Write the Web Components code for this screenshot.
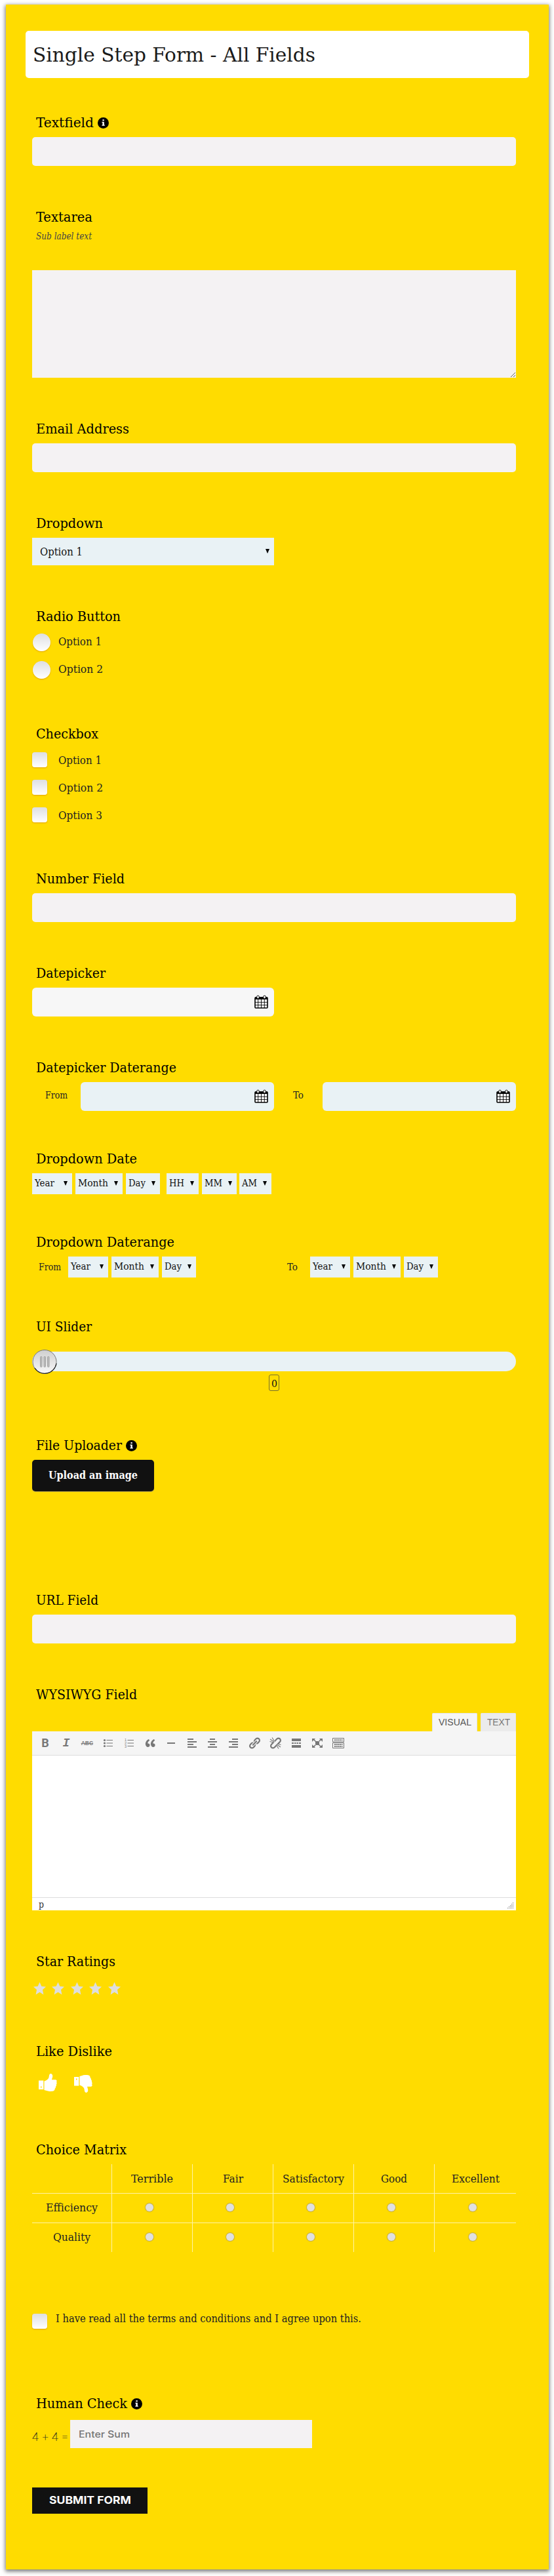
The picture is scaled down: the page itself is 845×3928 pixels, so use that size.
<!DOCTYPE html>
<html lang="en"><head><meta charset="utf-8"><title>Single Step Form - All Fields</title>
<style>
html,body{margin:0;padding:0;background:#fff}
body{font-family:"DejaVu Serif Condensed","DejaVu Serif",serif;font-stretch:condensed;color:#222;height:3928px;overflow:hidden}
</style></head><body>
<form-card>
<form-title><fit-text w="431">Single Step Form - All Fields</fit-text></form-title>
<form-field label="Textfield" w="88" h="144" info><text-box></text-box></form-field>
<form-field label="Textarea" w="86" h="323" sub="Sub label text"><text-box area></text-box></form-field>
<form-field label="Email Address" w="142" h="144"><text-box></text-box></form-field>
<form-field label="Dropdown" w="102" h="142"><select-box big label="Option 1" tw="65" bw="369"></select-box></form-field>
<form-field label="Radio Button" w="129" h="179"><choice-item round label="Option 1" tw="66"></choice-item><choice-item round label="Option 2" tw="68"></choice-item></form-field>
<form-field label="Checkbox" w="95" h="221"><choice-item label="Option 1" tw="66"></choice-item><choice-item label="Option 2" tw="68"></choice-item><choice-item label="Option 3" tw="67"></choice-item></form-field>
<form-field label="Number Field" w="135" h="144"><text-box></text-box></form-field>
<form-field label="Datepicker" w="106" h="144"><date-box style="width:369px;--bg:#f7f7f7"></date-box></form-field>
<form-field label="Datepicker Daterange" w="214" h="139"><date-range></date-range></form-field>
<form-field label="Dropdown Date" w="154" h="127"><date-selects time></date-selects></form-field>
<form-field label="Dropdown Daterange" w="211" h="129"><select-range></select-range></form-field>
<form-field label="UI Slider" w="85" h="181"><range-slider></range-slider></form-field>
<form-field label="File Uploader" w="131" h="236" info><form-button rounded><fit-text w="136">Upload an image</fit-text></form-button></form-field>
<form-field label="URL Field" w="95" h="144"><text-box></text-box></form-field>
<form-field label="WYSIWYG Field" w="154" h="407"><rich-editor></rich-editor></form-field>
<form-field label="Star Ratings" w="121" h="137"><star-rating></star-rating></form-field>
<form-field label="Like Dislike" w="116" h="150"><like-dislike></like-dislike></form-field>
<form-field label="Choice Matrix" w="138" h="264"><choice-matrix></choice-matrix></form-field>
<terms-check></terms-check>
<form-field label="Human Check" w="139" h="142" info><human-check></human-check></form-field>
<form-button><fit-text w="125">SUBMIT FORM</fit-text></form-button>
</form-card>
<script>
const define = (name, render) => customElements.define(name, class extends HTMLElement {
  connectedCallback() {
    if (this.shadowRoot) return;
    this.attachShadow({ mode: 'open' }).innerHTML = '<style>:host,*{box-sizing:border-box}' + render(this);
  }
});
const attr = (el, n) => el.getAttribute(n) || '';
const knob = 'background:linear-gradient(#dedfe2,#fff);box-shadow:0 1px 2px rgba(190,90,0,.45)';

define('form-card', () => `:host{display:block;margin:7px 8px 0 9px;height:3911px;padding:40px 50px 0 40px;background:#ffdc00;box-shadow:0 2px 6px 1px #777}</style><slot></slot>`);
define('form-title', () => `:host{display:block;height:72px;margin:0 -20px 54px -10px;padding:12px 0 0 11px;background:#fff;border-radius:5px;font-size:30px;line-height:49px;color:#1b1b1b}</style><slot></slot>`);
define('info-dot', () => `:host{display:block;width:17px;height:17px}svg{display:block}</style><svg width="17" height="17" viewBox="0 0 17 17"><circle cx="8.5" cy="8.5" r="8.5" fill="#000"/><path d="M7.400 3.200h2.400v2.100H7.400zM6.400 6.700h3.400v4.700h1v1.300H6.400v-1.300h1V8h-1z" fill="#fff"/></svg>`);
define('form-field', el => `:host{display:block;height:${attr(el,'h')}px}
.label{display:flex;height:28px;line-height:28px;font-size:20px;color:#000;padding-left:6px;gap:6px}
info-dot{margin-top:6px}.sub{height:22px;padding-left:6px;font-size:14px;line-height:28px;font-style:italic;color:#444;margin-bottom:44px;margin-top:1px}
.body{margin-top:8px}</style>
<div class="label"><fit-text w="${attr(el,'w')}">${attr(el,'label')}</fit-text>${el.hasAttribute('info')?'<info-dot></info-dot>':''}</div>
${attr(el,'sub')?`<div class="sub"><fit-text w="85">${attr(el,'sub')}</fit-text></div>`:''}<div class="body" ${attr(el,'sub')?'style="margin-top:0"':''}><slot></slot></div>`);
define('text-box', el => `:host{display:block}div{height:44px;background:#f4f2f3;border-radius:5px}
div.area{height:164px;border-radius:0;display:flex;justify-content:flex-end;align-items:flex-end}</style>
<div class="${el.hasAttribute('area')?'area':''}">${el.hasAttribute('area')?'<svg width="9" height="9" stroke="#666" stroke-width="1"><path d="M1 8L8 1M5 8L8 5"/></svg>':''}</div>`);
define('select-box', el => { const big = el.hasAttribute('big'); return `:host{display:block;flex:none;width:${attr(el,'bw')}px}
div{display:flex;justify-content:space-between;height:${big?42:32}px;line-height:${big?43:31}px;font-size:${big?16:14}px;background:#e9f2f5;color:#111;padding:0 7px 0 ${big?12:4}px;align-items:flex-start}
svg{margin-top:${big?17:12}px}</style><div><fit-text w="${attr(el,'tw')}">${attr(el,'label')}</fit-text><svg width="6" height="7"><path d="M0 0h6L3 7z" fill="#000"/></svg></div>`; });
define('choice-item', el => { const r = el.hasAttribute('round'); return `:host{display:flex;height:42px;line-height:32px;font-size:16px}
.k{${knob};flex:none;width:${r?27:23}px;height:${r?27:23}px;border-radius:${r?'50%':'4px'};margin:${r?'4px 12px 0 1px':'6px 17px 0 0'}}
fit-text{margin-top:${r?1:3}px}</style><i class="k"></i><fit-text w="${attr(el,'tw')}">${attr(el,'label')}</fit-text>`; });
define('date-box', () => `:host{display:block;flex:none}div{height:44px;border-radius:6px;background:var(--bg,#e9f2f5);display:flex;justify-content:flex-end;padding:11px 9px 0 0}</style>
<div><svg width="21" height="21" viewBox="0 0 21 21"><rect x="1" y="4" width="19" height="16" fill="#fff" stroke="#000" stroke-width="1.6" rx="1"/><path d="M1 3.5h19V7H1z"/><path d="M1 11.3h19M1 15.6h19M5.7 7v13M10.5 7v13M15.3 7v13" stroke="#000" stroke-width=".9"/><rect x="3.8" y="1.2" width="3.4" height="4.5" rx="1.5" fill="#fff" stroke="#000"/><rect x="13.8" y="1.2" width="3.4" height="4.5" rx="1.5" fill="#fff" stroke="#000"/></svg></div>`);
define('date-range', () => `:host{display:flex;font-size:14px;line-height:40px}.l{width:74px;display:flex;justify-content:center}.t{padding-right:0}date-box{width:295px}</style>
<span class="l"><fit-text w="34">From</fit-text></span><date-box></date-box><span class="l t"><fit-text w="16">To</fit-text></span><date-box></date-box>`);
define('date-selects', el => `:host{display:flex;gap:5px}.g{margin-left:5px}.h{margin-left:-1px}</style>
<select-box label="Year" tw="30" bw="61"></select-box><select-box label="Month" tw="46" bw="72"></select-box><select-box label="Day" tw="26" bw="52"></select-box>
${el.hasAttribute('time')?'<select-box class="g" label="HH" tw="23" bw="49"></select-box><select-box label="MM" tw="27" bw="53"></select-box><select-box class="h" label="AM" tw="23" bw="49"></select-box>':''}`);
define('select-range', () => `:host{display:grid;grid-template-columns:369px 369px;font-size:14px;line-height:32px}div{display:flex}span{width:55px;padding-left:10px}.t{padding-left:20px}</style>
<div><span><fit-text w="34">From</fit-text></span><date-selects></date-selects></div><div><span class="t"><fit-text w="16">To</fit-text></span><date-selects></date-selects></div>`);
define('range-slider', () => `:host{display:block;padding-top:16px}.t{height:30px;border-radius:15px;background:#e9f2f5}
svg{display:block;position:relative;top:-3px}.v{width:16px;height:25px;margin:5px auto 0;border:1px solid #77702e;border-radius:3px;font-size:14px;line-height:26px;display:flex;justify-content:center;color:#111}</style>
<div class="t"><svg width="39" height="38"><defs><linearGradient id="g" x2="0" y2="1"><stop stop-color="#cfcfcf"/><stop offset="1" stop-color="#f8f8f8"/></linearGradient></defs><circle cx="19" cy="18.5" r="18" fill="url(#g)" stroke="#777"/><path d="M4 28A18 18 0 0 0 37 21" fill="none" stroke="#222" stroke-width="1.2"/><g fill="#bbb" stroke="#a5a5a5"><rect x="12.5" y="10.5" width="2.500" height="16" rx="1"/><rect x="18" y="10.5" width="2.500" height="16" rx="1"/><rect x="23.500" y="10.500" width="2.500" height="16" rx="1"/></g></svg></div><div class="v"><fit-text w="9">0</fit-text></div>`);
define('form-button', el => el.hasAttribute('rounded') ? `:host{display:flex;justify-content:center;width:186px;height:48px;background:#111;color:#fff;border-radius:5px;box-shadow:0 1px 1px #b3a14b;font-size:16px;font-weight:bold;line-height:48px}</style><slot></slot>`
: `:host{display:flex;justify-content:center;width:176px;height:40px;background:#111;color:#fff;font:bold 16px/39px Inter,sans-serif}</style><slot></slot>`);

const bars = (a,b) => `<path d="M${a} 3H${b}V5H${a}zM3 7h14v2H3zM${a} 11H${b}v2H${a}zM3 15h14v2H3z"/>`;
const linkHalves = 'M17.74 2.76c1.68 1.69 1.68 4.41 0 6.1l-1.53 1.52c-1.12 1.12-2.7 1.47-4.14 1.09l2.62-2.61.76-.77.76-.76c.84-.84.84-2.2 0-3.04-.84-.85-2.2-.85-3.04 0l-.77.76-3.38 3.38c-.37-1.44-.02-3.02 1.1-4.14l1.52-1.53c1.69-1.68 4.42-1.68 6.1 0zM7.83 15.72l4.14-4.15c.38 1.44.03 3.02-1.09 4.14l-1.52 1.53c-1.69 1.68-4.41 1.68-6.1 0-1.68-1.68-1.68-4.42 0-6.1l1.53-1.52c1.12-1.12 2.7-1.47 4.14-1.1l-4.14 4.15c-.85.84-.85 2.2 0 3.05.84.84 2.2.84 3.04 0z';
const rules = '<path d="M7.500 5h9.500v1H7.500zM7.500 9.500h9.500v1H7.500zM7.500 14h9.500v1H7.500z"/>';
const icons = [
 rules + '<circle cx="4.500" cy="5.500" r="1.600"/><circle cx="4.500" cy="10" r="1.600"/><circle cx="4.500" cy="14.500" r="1.600"/>',
 rules + '<text x="3" y="7.300" font-size="5.500">1</text><text x="3" y="12" font-size="5.500">2</text><text x="3" y="16.700" font-size="5.500">3</text>',
 '<path d="M9.490 13.220c0-.74-.2-1.380-.61-1.900-.62-.78-1.830-.88-2.530-.72-.29-1.650 1.110-3.750 2.920-4.650L7.880 4c-2.730 1.300-5.420 4.280-4.960 8.050C3.210 14.430 4.590 16 6.540 16c.85 0 1.560-.25 2.120-.75s.83-1.180.83-2.030zm8.050 0c0-.74-.2-1.380-.61-1.900-.63-.78-1.830-.88-2.530-.72-.29-1.650 1.110-3.750 2.920-4.650L15.930 4c-2.730 1.300-5.410 4.280-4.950 8.050.29 2.380 1.660 3.950 3.610 3.950.85 0 1.560-.25 2.120-.75s.83-1.180.83-2.030z"/>',
 '<path d="M4 9h12v2H4z"/>',
 bars(3,12), bars(6,14), bars(8,17),
 `<path d="${linkHalves}M8.590 13.430l5.340-5.340c.42-.42.42-1.100 0-1.520-.44-.43-1.130-.39-1.530 0l-5.330 5.340c-.42.42-.42 1.100 0 1.520.44.43 1.130.39 1.520 0z"/>`,
 `<path d="${linkHalves}"/><path d="M2 4l6 4M5 1.500L8.500 7M1.500 7.500L7 9M18 16l-6-4M15 18.500L11.500 13M18.500 12.500L13 11" stroke="#777" stroke-width="1.100"/>`,
 '<path d="M3 3h14v4H3zM3 13h14v4H3zM3 9h3v2H3zM7 9h2.500v2H7zM10.500 9H13v2h-2.500zM14 9h3v2h-3z"/>',
 '<path d="M7 7h6v6H7zM2 3h5L5.600 4.400 8 7 7 8 4.400 5.600 2 8zM18 3h-5l1.400 1.400L12 7l1 1 2.600-2.400L18 8zM2 17h5l-1.400-1.400L8 13l-1-1-2.600 2.400L2 12zM18 17h-5l1.400-1.400L12 13l1-1 2.600 2.400L18 12z"/>',
 '<path d="M1.500 2.500h17v5.500h-17zM1.500 9.500h17v8h-17z" fill="none" stroke="#777"/><path d="M4 5.200h12.500M4 12h12.500M4 15h12.500" stroke="#777" stroke-width="1.900" stroke-dasharray="2 .8"/>'
];
define('rich-editor', () => `:host{display:block;padding-top:6px;font-family:"Liberation Sans",Arial,sans-serif}
.tabs{height:28px;display:flex;justify-content:flex-end;gap:5px;font-size:14px;line-height:28px;color:#555}
.tab{width:69px;background:#f5f5f5;display:flex;justify-content:center;border:1px solid #e5e5e5;border-bottom:0;line-height:27px;border-radius:2px 2px 0 0}.off{width:54px;background:#ebebeb;color:#777}
.bar{height:37px;background:#f5f5f5;border-bottom:1px solid #ddd;padding:8px 0 0 4px;display:flex;color:#777}
.c{width:31.95px;height:20px;display:flex;justify-content:center;align-items:center;line-height:20px;fill:#777}
.b{font:bold 18px/20px Roboto,sans-serif}.i{font:italic bold 18px/20px "Liberation Mono",monospace}.s{font:bold 8.500px/20px "Liberation Sans",sans-serif;text-decoration:line-through}
.area{height:217px;background:#fff;border-bottom:1px solid #ddd}.foot{height:19px;background:#fff;padding:0 3px 0 10px;font:14px/21px "DejaVu Serif Condensed","DejaVu Serif",serif;color:#333;display:flex;justify-content:space-between;align-items:flex-start}</style>
<div class="tabs"><span class="tab"><fit-text w="50">VISUAL</fit-text></span><span class="tab off"><fit-text w="35">TEXT</fit-text></span></div>
<div class="bar"><span class="c b">B</span><span class="c i">I</span><span class="c s">ABC</span>${icons.map(i=>`<span class="c"><svg width="20" height="20" viewBox="0 0 20 20">${i}</svg></span>`).join('')}</div>
<div class="area"></div><div class="foot"><fit-text w="8">p</fit-text><svg width="10" height="10" style="margin-top:7px" fill="#777"><path d="M8 0h1v1H8zM8 2h1v1H8zM6 2h1v1H6zM8 4h1v1H8zM6 4h1v1H6zM4 4h1v1H4zM8 6h1v1H8zM6 6h1v1H6zM4 6h1v1H4zM2 6h1v1H2zM8 8h1v1H8zM6 8h1v1H6zM4 8h1v1H4zM2 8h1v1H2zM0 8h1v1H0z"/></svg></div>`);
define('star-rating', () => `:host{display:flex;padding:9px 0 0 2px;gap:9.400px}svg{display:block}</style>` + '<svg width="19" height="20" viewBox="0 0 19 19"><path d="M9.500 0l2.800 6.300 6.700.7-5 4.600L15.400 19 9.500 15.200 3.600 19 5 11.600 0 7l6.700-.7z" fill="#dedede"/></svg>'.repeat(5));
const thumb = '<path fill="#fff" fill-rule="evenodd" d="M0 10.500h7.300v13.500H0zM3 19.500v2h1.500v-2zM8.500 11.500c3-.8 5-2.500 6.500-4.500 1-1.700.6-4.300 1.500-5.800 1-1.700 3.700-1.400 4.500 1 .8 2.600-.6 4.800-1 7.100h5.500c2.500.3 2.500 2.500 1.600 3.500.8 1 .7 2.700-.3 3.700.5 1.200 0 2.600-.8 3.300.2 1.200-.3 2.300-1.200 2.800-.2 4.300-3.500 4.600-8.300 4.300-3.500-.2-5.500-1.600-8-1.900z"/>';
define('like-dislike', () => `:host{display:flex;padding:12px 0 0 10px;gap:26px}.d{margin-top:2px}</style><svg width="28" height="27">${thumb}</svg><svg class="d" width="28" height="27"><g transform="matrix(1 0 0 -1 0 27)">${thumb}</g></svg>`);
const cell = (t,w) => `<div><fit-text w="${w}">${t}</fit-text></div>`;
const row = '<div class="r"><i></i></div>'.repeat(5);
define('choice-matrix', () => `:host{display:grid;grid-template-columns:121px repeat(4,123px) 125px;grid-template-rows:44px 45px 45px;font-size:16px;line-height:44px}
div{display:flex;justify-content:center;align-items:center;border-left:1px solid #fff3a6;border-top:1px solid #fff3a6;line-height:44px;overflow:hidden}
div:nth-of-type(6n+1){border-left:0}div:nth-of-type(-n+6){border-top:0;padding-top:1px}.r{padding:0 8px 2px 0}
i{width:12px;height:12px;border-radius:50%;background:#e0e0e0;box-shadow:0 0 1px 1px #c6ae42}</style>
<div></div>${cell('Terrible',64)}${cell('Fair',31)}${cell('Satisfactory',94)}${cell('Good',40)}${cell('Excellent',73)}${cell('Efficiency',79)}${row}${cell('Quality',57)}${row}`);
define('terms-check', () => `:host{display:flex;height:123px;font-size:16px;line-height:26px}i{${knob};width:23px;height:23px;border-radius:4px;margin-right:13px}fit-text{margin-top:-5px}</style><i></i><fit-text w="466">I have read all the terms and conditions and I agree upon this.</fit-text>`);
define('human-check', () => `:host{display:flex;padding-top:3px;font-family:Lato,sans-serif;color:#222}.q{width:58px;font-size:18px;font-weight:300;line-height:50px}.e{width:369px;height:43px;background:#f4f2f3;font:500 14.500px/43px Inter,sans-serif;color:#757575;padding-left:13px}</style>
<span class="q"><fit-text w="55">4 + 4 =</fit-text></span><span class="e"><fit-text w="78">Enter Sum</fit-text></span>`);

/* Stretches a line so that it fills a fixed measure. */
customElements.define('fit-text', class extends HTMLElement {
  connectedCallback() {
    if (this.shadowRoot) return;
    const root = this.attachShadow({ mode: 'open' });
    root.innerHTML = '<style>:host{display:block;white-space:pre;flex:none}span{display:inline-block;transform-origin:0 0}</style><span><slot></slot></span>';
    const line = root.querySelector('span'), target = +this.getAttribute('w');
    line.style.transform = `scaleX(${target / line.getBoundingClientRect().width})`;
    this.style.width = target + 'px';
  }
});
</script></body></html>
